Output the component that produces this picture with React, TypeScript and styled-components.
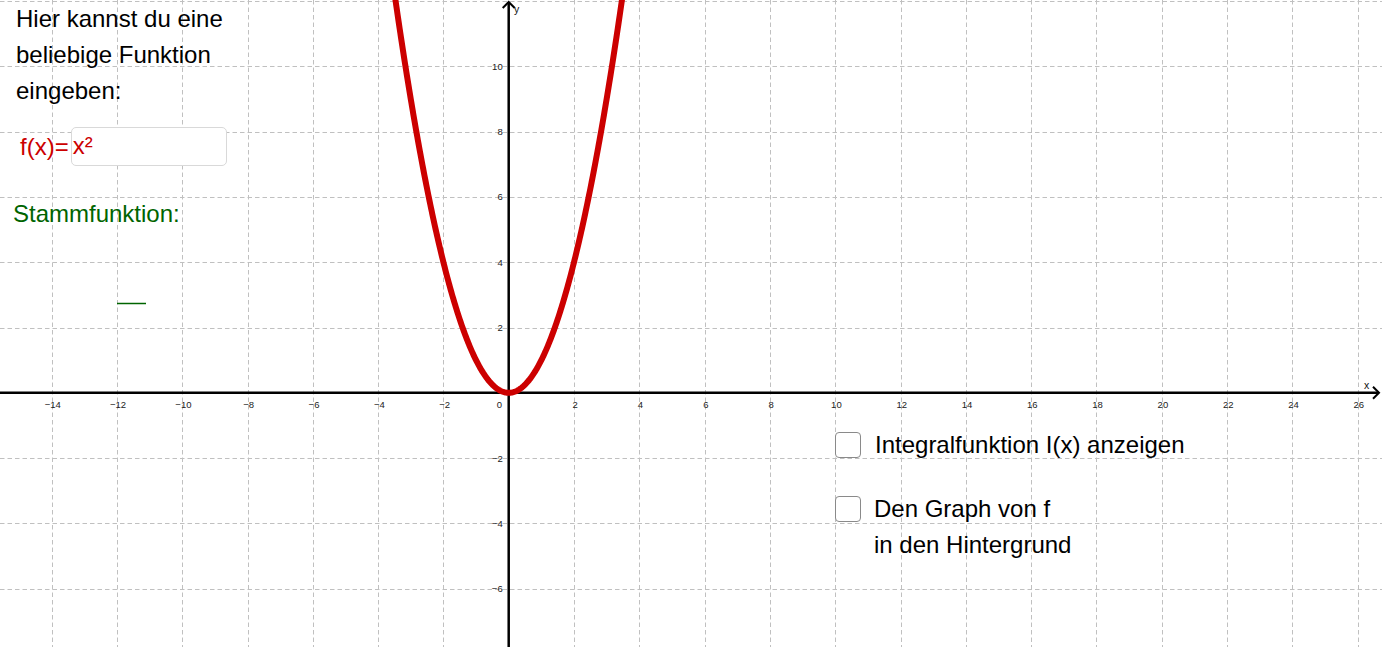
import React from "react";
import styled, { createGlobalStyle } from "styled-components";

const GlobalStyle = createGlobalStyle`
  html, body { margin: 0; padding: 0; background: #ffffff; }
  body { font-family: "Liberation Sans", Arial, sans-serif; overflow: hidden; }
`;

const OX = 508.7;
const OY = 392.8;
const U = 32.65;
const W = 1382;
const H = 647;

const px = (x: number) => OX + x * U;
const py = (y: number) => OY - y * U;

const Page = styled.div`
  position: relative;
  width: ${W}px;
  height: ${H}px;
  overflow: hidden;
  background: #ffffff;
  color: #000000;
  font-family: "Liberation Sans", Arial, sans-serif;
`;

const GraphSvg = styled.svg`
  position: absolute;
  left: 0;
  top: 0;
  display: block;
`;

const TickLabel = styled.text`
  font-family: "Liberation Sans", Arial, sans-serif;
  font-size: 9.5px;
  fill: #222222;
`;

const AxisName = styled.text`
  font-family: "Liberation Sans", Arial, sans-serif;
  font-size: 10.5px;
  fill: #111111;
`;

const IntroText = styled.div`
  position: absolute;
  left: 16px;
  top: 1px;
  font-size: 24px;
  line-height: 36px;
  color: #000000;
  white-space: nowrap;
`;

const FormulaRow = styled.div`
  position: absolute;
  left: 20px;
  top: 127px;
  display: flex;
  align-items: flex-start;
  gap: 2px;
`;

const FormulaLabel = styled.span`
  font-size: 24px;
  line-height: 39px;
  color: #cc0000;
`;

const InputBox = styled.div`
  box-sizing: border-box;
  width: 156px;
  height: 39px;
  border: 1.5px solid #d9d9d9;
  border-radius: 5px;
  padding-left: 1px;
  font-size: 24px;
  line-height: 36px;
  color: #cc0000;
  background: #ffffff;
`;

const StammLabel = styled.div`
  position: absolute;
  left: 13px;
  top: 196px;
  font-size: 24px;
  line-height: 36px;
  color: #006400;
  white-space: nowrap;
`;

const CheckList = styled.div`
  position: absolute;
  left: 835px;
  top: 427px;
  display: flex;
  flex-direction: column;
  gap: 28px;
`;

const CheckItem = styled.label<{ $gap: number }>`
  display: flex;
  align-items: flex-start;
  gap: ${(p) => p.$gap}px;
  cursor: pointer;
`;

const CheckBox = styled.span`
  box-sizing: border-box;
  flex: none;
  width: 26px;
  height: 26px;
  margin-top: 5px;
  border: 1.5px solid #8a8a8a;
  border-radius: 4px;
  background: #ffffff;
`;

const CheckText = styled.span`
  font-size: 24px;
  line-height: 36px;
  color: #000000;
  white-space: nowrap;
`;

const Graph: React.FC = () => {
  const vGrid: number[] = [];
  for (let k = -16; k <= 30; k += 2) {
    const x = px(k);
    if (k !== 0 && x > 0 && x < W) vGrid.push(k);
  }
  const hGrid: number[] = [];
  for (let k = -10; k <= 14; k += 2) {
    const y = py(k);
    if (k !== 0 && y > -1 && y < H) hGrid.push(k);
  }
  const pts: string[] = [];
  for (let x = -3.7; x <= 3.7001; x += 0.02) {
    pts.push(`${px(x).toFixed(2)},${py(x * x).toFixed(2)}`);
  }
  const fmt = (n: number) => (n < 0 ? `\u2212${Math.abs(n)}` : `${n}`);

  return (
    <GraphSvg width={W} height={H} viewBox={`0 0 ${W} ${H}`}>
      <g stroke="#c0c0c0" strokeWidth={1} strokeDasharray="4.5 3" fill="none">
        {vGrid.map((k) => (
          <line key={`v${k}`} x1={Math.round(px(k)) + 0.5} y1={0} x2={Math.round(px(k)) + 0.5} y2={H} />
        ))}
        {hGrid.map((k) => (
          <line key={`h${k}`} x1={0} y1={Math.round(py(k)) + 0.5} x2={W} y2={Math.round(py(k)) + 0.5} />
        ))}
      </g>

      <g stroke="#000000" strokeWidth={2.5} fill="none" strokeLinecap="butt">
        <line x1={0} y1={OY} x2={1379} y2={OY} />
        <polyline points={`1373,${OY - 6} 1379,${OY} 1373,${OY + 6}`} strokeLinejoin="miter" strokeWidth={2} />
        <line x1={OX} y1={H} x2={OX} y2={2} />
        <polyline points={`${OX - 6},8 ${OX},2 ${OX + 6},8`} strokeLinejoin="miter" strokeWidth={2} />
      </g>

      {vGrid.map((k) => (
        <TickLabel key={`xl${k}`} x={px(k) + 1.2} y={407.5} textAnchor="middle">
          {fmt(k)}
        </TickLabel>
      ))}
      <TickLabel x={502} y={407.5} textAnchor="end">0</TickLabel>
      {hGrid
        .filter((k) => py(k) > 12)
        .map((k) => (
          <TickLabel key={`yl${k}`} x={502.7} y={py(k) + 3.5} textAnchor="end">
            {fmt(k)}
          </TickLabel>
        ))}
      <AxisName x={1364} y={388.5}>x</AxisName>
      <AxisName x={514} y={13}>y</AxisName>

      <line x1={117} y1={303.5} x2={146} y2={303.5} stroke="#006400" strokeWidth={1.5} />

      <polyline
        points={pts.join(" ")}
        fill="none"
        stroke="#cc0000"
        strokeWidth={6}
        strokeLinejoin="round"
        strokeLinecap="round"
      />
    </GraphSvg>
  );
};

export default function App() {
  return (
    <>
      <GlobalStyle />
      <Page>
        <Graph />
        <IntroText>
          Hier kannst du eine
          <br />
          beliebige Funktion
          <br />
          eingeben:
        </IntroText>
        <FormulaRow>
          <FormulaLabel>f(x)=</FormulaLabel>
          <InputBox>x²</InputBox>
        </FormulaRow>
        <StammLabel>Stammfunktion:</StammLabel>
        <CheckList>
          <CheckItem $gap={14}>
            <CheckBox />
            <CheckText>Integralfunktion I(x) anzeigen</CheckText>
          </CheckItem>
          <CheckItem $gap={13}>
            <CheckBox />
            <CheckText>
              Den Graph von f
              <br />
              in den Hintergrund
            </CheckText>
          </CheckItem>
        </CheckList>
      </Page>
    </>
  );
}
